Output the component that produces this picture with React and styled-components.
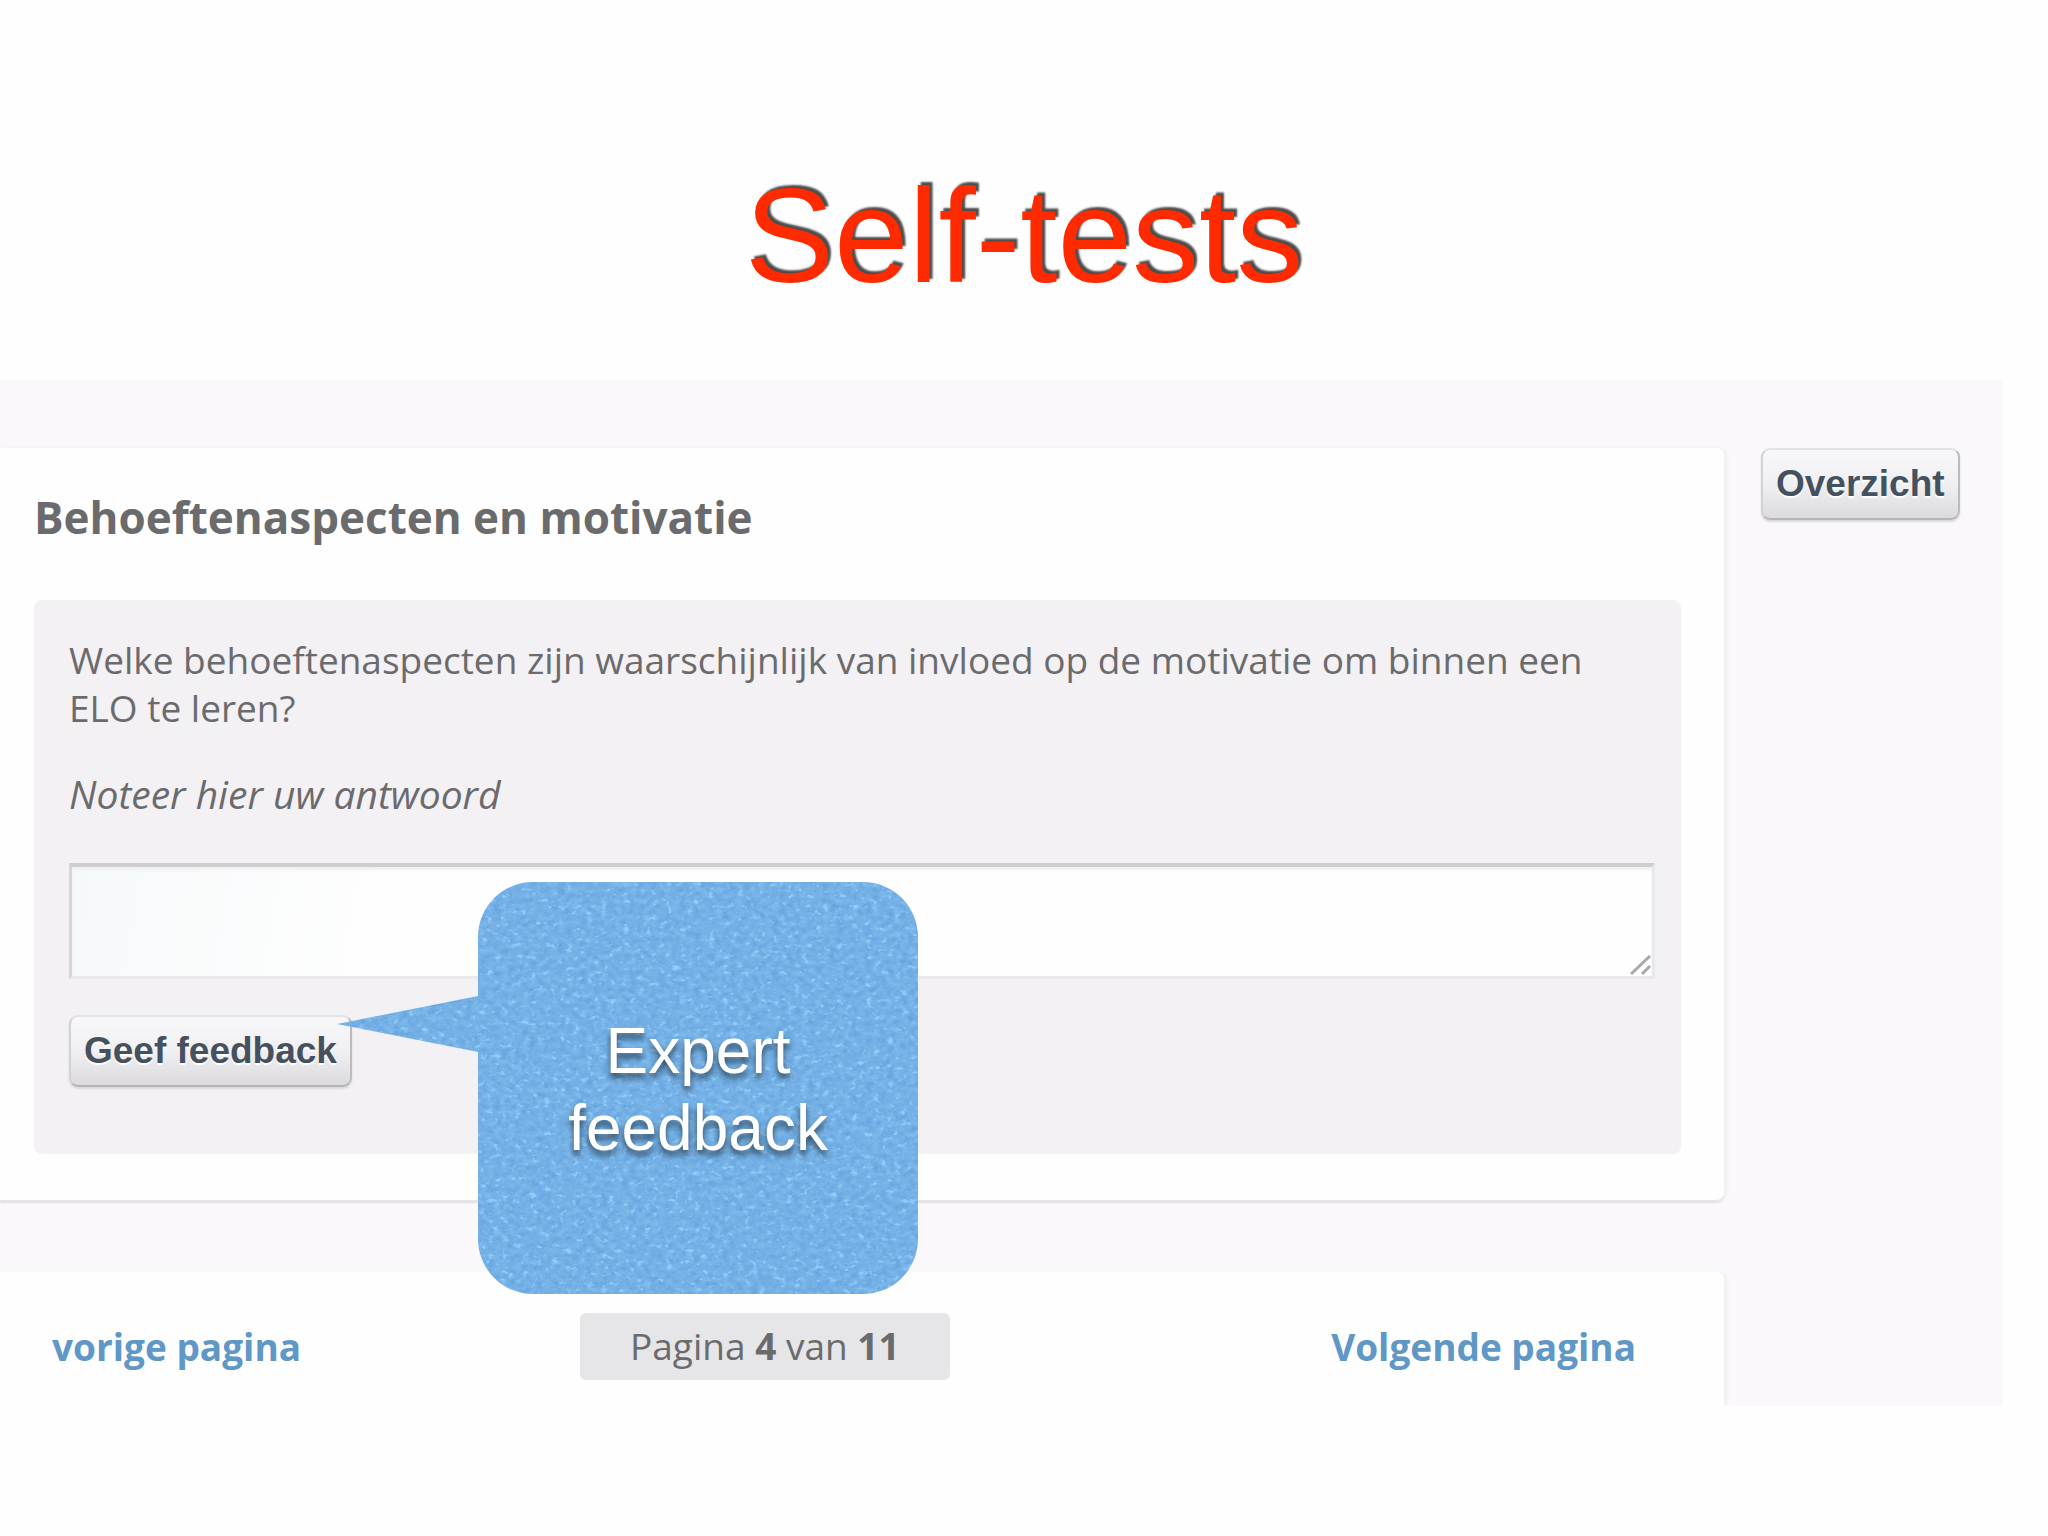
import styled, { createGlobalStyle } from 'styled-components'

const App = () => {
  return (
    <>
      <GlobalStyle />
      <Slide>
        <Title>Self-tests</Title>
        <Screen>
          <Main>
            <Card>
              <h2>Behoeftenaspecten en motivatie</h2>
              <Question>
                <p>
                  Welke behoeftenaspecten zijn waarschijnlijk van invloed op de motivatie om binnen een ELO te leren?
                </p>
                <label htmlFor='answer'>Noteer hier uw antwoord</label>
                <Answer>
                  <textarea id='answer' />
                  <Grip />
                </Answer>
                <Button type='button'>Geef feedback</Button>
                <Callout />
              </Question>
            </Card>
            <Pager>
              <a href='#vorige'>vorige pagina</a>
              <Status>
                Pagina <b>4</b> van <b>11</b>
              </Status>
              <a href='#volgende'>Volgende pagina</a>
            </Pager>
          </Main>
          <Aside>
            <Button type='button'>Overzicht</Button>
          </Aside>
        </Screen>
      </Slide>
    </>
  )
}

const Grip = () => (
  <GripIcon viewBox='0 0 22 20' aria-hidden='true'>
    <path d='M1 19L20 1M12 19L20 11' />
  </GripIcon>
)

const Callout = () => (
  <Bubble>
    <svg viewBox='0 0 581 412' aria-hidden='true'>
      <defs>
        <filter id='paper' x='0' y='0' width='100%' height='100%' colorInterpolationFilters='sRGB'>
          <feTurbulence type='fractalNoise' baseFrequency='0.14 0.18' numOctaves='3' seed='8' result='noise' />
          <feColorMatrix
            in='noise'
            values='0.13 0.08 0 0 0.35  0.12 0.06 0 0 0.6  0.07 0.03 0 0 0.85  0 0 0 0 1'
            result='grain'
          />
          <feColorMatrix
            in='noise'
            values='0 0 0 0 0.56  0 0 0 0 0.81  0 0 0 0 0.98  0 0 5 0 -3'
            result='specks'
          />
          <feMerge result='surface'>
            <feMergeNode in='grain' />
            <feMergeNode in='specks' />
          </feMerge>
          <feComposite in='surface' in2='SourceGraphic' operator='in' />
        </filter>
      </defs>
      <path
        filter='url(#paper)'
        fill='#74b0e6'
        d='M196 0H526A55 55 0 0 1 581 55V357A55 55 0 0 1 526 412H196A55 55 0 0 1 141 357V170L0 142L141 114V55A55 55 0 0 1 196 0Z'
      />
    </svg>
    <span>Expert feedback</span>
  </Bubble>
)

export default App

const GlobalStyle = createGlobalStyle`
  * {
    box-sizing: border-box;
  }
  body {
    margin: 0;
    background-color: #fefefe;
  }
  h1, h2, p {
    margin: 0;
  }
`

const Slide = styled.main`
  font-family: 'Open Sans', 'Noto Sans', sans-serif;
  color: #6b6b6d;
`

const Title = styled.h1`
  padding: 160px 0 68px;
  font-family: 'Liberation Sans', Arial, sans-serif;
  font-size: 134px;
  line-height: 152px;
  font-weight: 400;
  text-align: center;
  color: #ff2a00;
  text-shadow: 3px -3px 2px rgba(0, 0, 0, 0.7);
`

const Screen = styled.div`
  display: flex;
  margin-right: 45px;
  padding-top: 68px;
  background-color: #faf8fb;
`

const Main = styled.div`
  flex: 1;
  display: flex;
  flex-direction: column;
  row-gap: 72px;
`

const Aside = styled.aside`
  width: 279px;
  padding-left: 37px;
`

const Card = styled.section`
  padding: 39px 43px 46px 34px;
  background-color: #fefefe;
  border-radius: 0 8px 8px 0;
  box-shadow: 3px 0 4px #f1eff3, 0 3px 2px #dfdde1;
  h2 {
    padding-bottom: 53px;
    font-size: 44px;
    line-height: 60px;
    font-weight: 700;
  }
`

const Question = styled.form`
  position: relative;
  padding: 36px 26px 67px 35px;
  background-color: #f3f1f4;
  border-radius: 8px;
  font-size: 37px;
  line-height: 48px;
  label {
    display: block;
    padding: 38px 0 45px;
    font-size: 39px;
    font-style: italic;
  }
`

const Answer = styled.div`
  position: relative;
  margin-bottom: 36px;
  textarea {
    display: block;
    width: 100%;
    height: 116px;
    padding: 12px;
    resize: none;
    outline: none;
    border: 3px solid #e9e8eb;
    border-top: 4px solid #cecdd0;
    border-left-color: #d6d5d8;
    border-radius: 0;
    background: linear-gradient(100deg, #f6f9fa, #fefefe 20%);
    box-shadow: inset 0 3px 3px #f0eff1;
    font: inherit;
    color: inherit;
  }
`

const GripIcon = styled.svg`
  position: absolute;
  right: 3px;
  bottom: 4px;
  width: 22px;
  height: 20px;
  fill: none;
  stroke: #a9a8ab;
  stroke-width: 3;
`

const Button = styled.button`
  height: 72px;
  padding: 0 13px;
  border: 2px solid #d2d1d4;
  border-top-color: #e2e1e4;
  border-right-color: #bbbabd;
  border-bottom-color: #b5b4b7;
  border-radius: 9px;
  background: linear-gradient(#f8f7fa, #f0eff1 50%, #dcdadd);
  box-shadow: 0 2px 2px #d8d7da;
  font-family: 'Liberation Sans', Arial, sans-serif;
  font-size: 37px;
  line-height: 44px;
  font-weight: 700;
  color: #465160;
  text-shadow: 0 2px 1px #fff;
`

const Bubble = styled.div`
  position: absolute;
  z-index: 1;
  left: 303px;
  top: 282px;
  width: 581px;
  height: 412px;
  padding: 131px 80px 0 221px;
  svg {
    position: absolute;
    inset: 0;
    width: 100%;
    height: 100%;
  }
  span {
    position: relative;
    display: block;
    font-family: 'Liberation Sans', Arial, sans-serif;
    font-size: 64px;
    line-height: 77px;
    text-align: center;
    color: #fff;
    text-shadow: 0 5px 6px rgba(0, 0, 0, 0.6);
  }
`

const Pager = styled.nav`
  display: grid;
  grid-template-columns: 10fr auto 13fr;
  align-items: center;
  padding: 41px 88px 26px 52px;
  background-color: #fefefe;
  border-radius: 0 8px 0 0;
  box-shadow: 3px 0 4px #f1eff3;
  font-size: 37px;
  line-height: 48px;
  clip-path: inset(0 -8px 0 0);
  a {
    font-weight: 700;
    color: #5f97c6;
    text-decoration: none;
  }
  a:last-child {
    justify-self: end;
  }
`

const Status = styled.span`
  padding: 9px 50px 10px;
  border-radius: 6px;
  background-color: #e6e5e7;
`
